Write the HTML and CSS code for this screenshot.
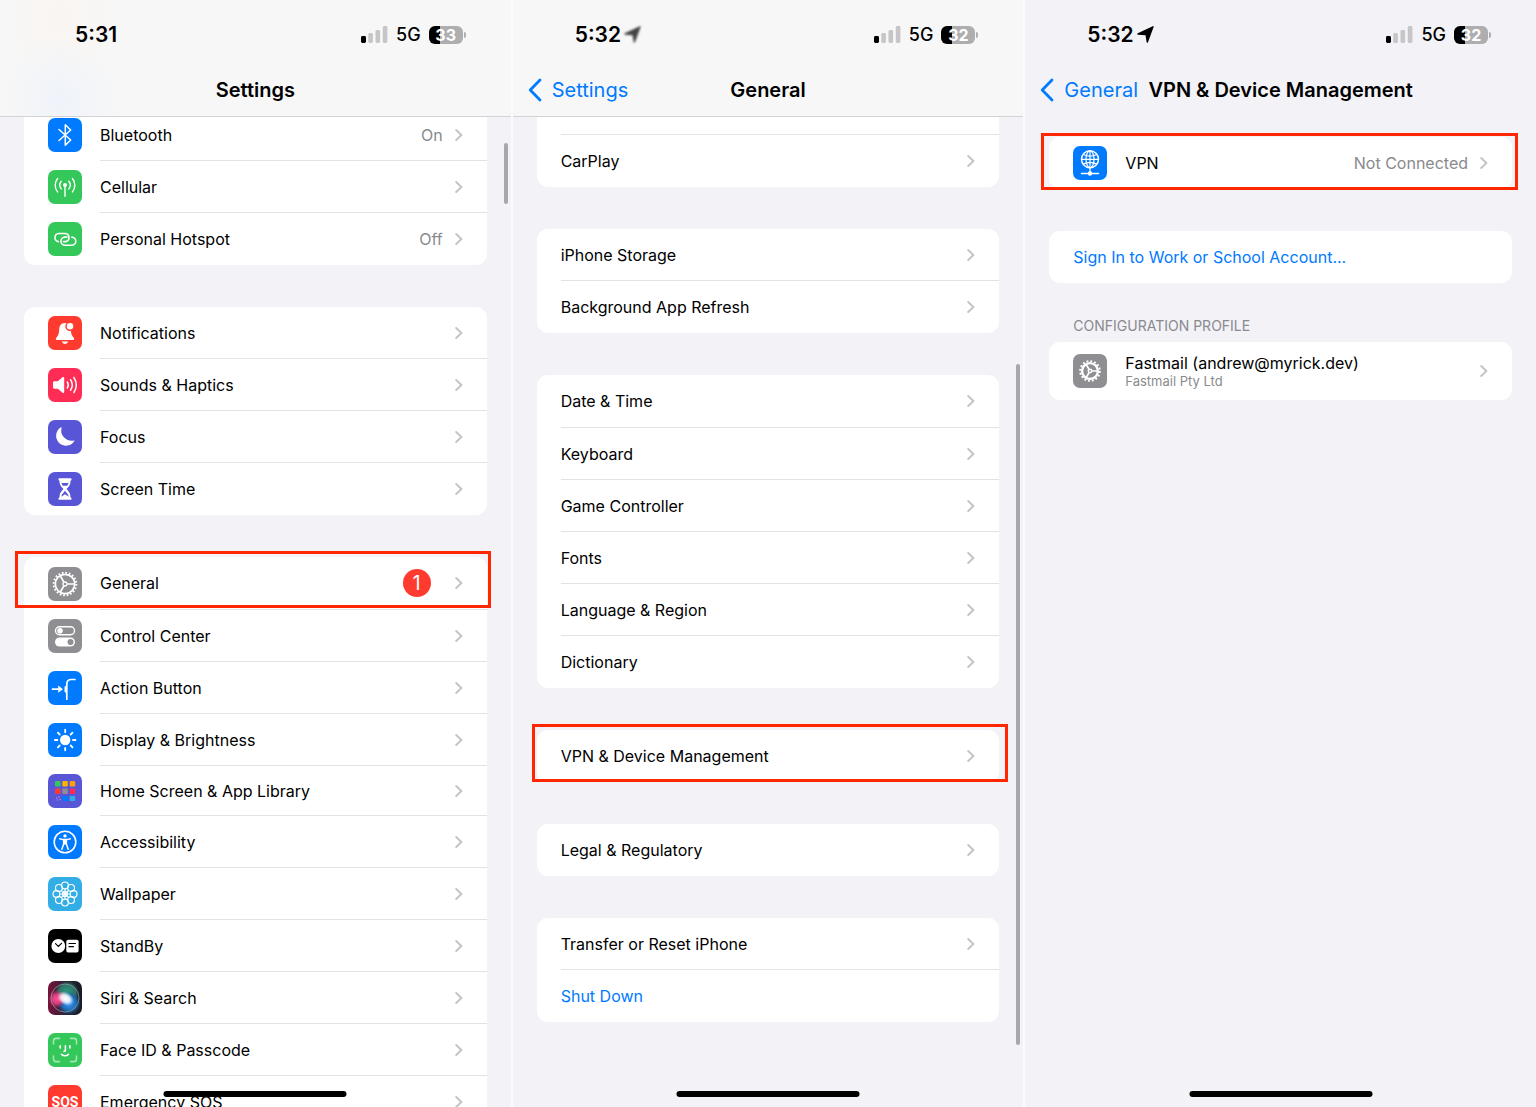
FILE: index.html
```html
<!DOCTYPE html>
<html lang="en">
<head>
  <meta charset="UTF-8" />
  <meta name="viewport" content="width=device-width, initial-scale=1.0" />
  <title>Settings</title>
  <link rel="stylesheet" href="styles.css">
</head>
<body>
  <!-- shared shapes -->
  <svg class="defs" width="0" height="0" aria-hidden="true">
    <symbol id="chevron" viewBox="0 0 8 14"><path d="M1.2 2 6.4 7 1.2 12" fill="none" stroke="#c4c4c7" stroke-width="1.9" stroke-linecap="round" stroke-linejoin="round"/></symbol>
    <symbol id="back" viewBox="0 0 14 24"><path d="M12 2 2.2 12 12 22" fill="none" stroke="#007aff" stroke-width="2.8" stroke-linecap="round" stroke-linejoin="round"/></symbol>
    <symbol id="signal" viewBox="0 0 27 17">
      <rect x="0" y="10" width="5" height="7" rx="1.4" fill="#000"/>
      <g fill="#c6c6c8"><rect x="7.3" y="7" width="4.6" height="10" rx="1.4"/><rect x="14.5" y="4" width="4.6" height="13" rx="1.4"/><rect x="21.8" y="0" width="4.6" height="17" rx="1.4"/></g>
    </symbol>
    <symbol id="location" viewBox="0 0 17 17"><path d="M16.6.9 11 16.200c-.3.800-1.300.700-1.400-.1L8.500 9.200 1 8.700c-.9-.1-1-1.100-.2-1.500L15.700.200c.6-.3 1.100.1.900.7Z"/></symbol>
    <symbol id="gear" viewBox="0 0 34 34">
      <g fill="none" stroke="#fff">
        <circle cx="17" cy="17" r="9.700" stroke-width="1.700"/>
        <circle cx="17" cy="17" r="11.300" stroke-width="2" stroke-dasharray="1.75 1.800"/>
        <circle cx="17" cy="17" r="2" stroke-width="1.300"/>
        <path d="M19.200 17H26.500M15.900 15.100 12.200 8.700M15.900 18.900 12.200 25.300" stroke-width="1.700"/>
      </g>
    </symbol>
  </svg>

  <main class="screens">

    <section class="phone">
      <header class="top top-blur top-tint">
        <div class="status">
          <span class="time time-wide">5:31</span>
          <svg class="signal"><use href="#signal"/></svg>
          <span class="network">5G</span>
          <span class="battery">33</span>
        </div>
        <nav class="nav"><h1>Settings</h1></nav>
      </header>

      <div class="content content-scrolled">
        <ul class="group">
          <li><a class="row" href="#">
            <svg class="icon blue" viewBox="0 0 34 34"><path d="M11 11.500 22.700 22 17.300 27.200V6.800L22.700 12 11 22.500" fill="none" stroke="#fff" stroke-width="1.500" stroke-linejoin="round" stroke-linecap="round"/></svg>
            <span class="body"><span class="label">Bluetooth</span><span class="value">On</span><svg class="chevron"><use href="#chevron"/></svg></span>
          </a></li>
          <li><a class="row" href="#">
            <svg class="icon green" viewBox="0 0 34 34"><g fill="none" stroke="#fff" stroke-width="1.400" stroke-linecap="round"><path d="M17 15.500V26.300M13.200 11.300a6 6 0 0 0 0 7.600M20.800 11.300a6 6 0 0 1 0 7.600M9.600 8.500a10.500 10.500 0 0 0 0 13.400M24.400 8.500a10.500 10.500 0 0 1 0 13.400"/></g><circle cx="17" cy="15" r="2" fill="#fff"/></svg>
            <span class="body"><span class="label">Cellular</span><svg class="chevron"><use href="#chevron"/></svg></span>
          </a></li>
          <li><a class="row" href="#">
            <svg class="icon green" viewBox="0 0 34 34"><g fill="none" stroke="#fff" stroke-width="1.600" stroke-linecap="round"><path d="M10.300 19.600a4.100 4.100 0 0 1 .4-8.100h6.600a4.100 4.100 0 0 1 .4 8.100h-2.200"/><path d="M23.900 15.100a4.100 4.100 0 0 1-.4 8.200h-6.300a4.100 4.100 0 0 1-.4-8.200h2.200"/></g></svg>
            <span class="body"><span class="label">Personal Hotspot</span><span class="value">Off</span><svg class="chevron"><use href="#chevron"/></svg></span>
          </a></li>
        </ul>

        <ul class="group">
          <li><a class="row" href="#">
            <svg class="icon red" viewBox="0 0 34 34"><path d="M17 7c-4 0-5.600 3-5.800 6.300-.2 4.200-.8 6.300-2.900 8.400-.9.900-.6 2.300.7 2.300h16c1.300 0 1.600-1.400.7-2.300-2.100-2.100-2.700-4.200-2.900-8.400C22.600 10 21 7 17 7ZM13.800 25.400h6.400a3.300 3.300 0 0 1-6.400 0Z" fill="#fff"/><circle cx="22" cy="10.300" r="4" fill="#fff" stroke="#ff3b30" stroke-width="1.500"/></svg>
            <span class="body"><span class="label">Notifications</span><svg class="chevron"><use href="#chevron"/></svg></span>
          </a></li>
          <li><a class="row" href="#">
            <svg class="icon pink" viewBox="0 0 34 34"><path d="M5 14.700c0-.9.600-1.500 1.500-1.500H9.800l4.700-4c.8-.6 1.700-.3 1.700.7v14.200c0 1-.9 1.300-1.700.7l-4.700-4H6.500c-.9 0-1.500-.6-1.500-1.500Z" fill="#fff"/><path d="M19.300 14a5.500 5.500 0 0 1 0 6M22.500 11.700a9.500 9.500 0 0 1 0 10.600M25.900 9.500a14 14 0 0 1 0 15" fill="none" stroke="#fff" stroke-width="1.500" stroke-linecap="round"/></svg>
            <span class="body"><span class="label">Sounds &amp; Haptics</span><svg class="chevron"><use href="#chevron"/></svg></span>
          </a></li>
          <li><a class="row" href="#">
            <svg class="icon indigo" viewBox="0 0 34 34"><path d="M13.600 7.700a10.200 10.200 0 0 0 12.300 12.700c.5-.1.700.2.500.6A9.900 9.900 0 1 1 13 7.200c.4-.1.700.1.600.5Z" fill="#fff"/></svg>
            <span class="body"><span class="label">Focus</span><svg class="chevron"><use href="#chevron"/></svg></span>
          </a></li>
          <li><a class="row" href="#">
            <svg class="icon indigo" viewBox="0 0 34 34"><path d="M11.500 6.300h11c1.500 0 1.500 2.200 0 2.400 0 4.600-2 6-4 8.300 2 2.300 4 3.700 4 8.400 1.500.2 1.500 2.400 0 2.400h-11c-1.500 0-1.500-2.200 0-2.400 0-4.700 2-6.100 4-8.400-2-2.300-4-3.700-4-8.300-1.500-.2-1.500-2.400 0-2.400Z" fill="#fff"/><path d="M13.200 9.500h7.600c-.2 2-.9 3.200-1.700 4.300h-4.200c-.8-1.100-1.500-2.300-1.700-4.300ZM17 18.500c.6 1.900 3.500 3.400 3.700 6.200L17 22.300l-3.700 2.400c.2-2.800 3.100-4.300 3.700-6.200Z" fill="#5856d6"/><path d="M13.200 8.400h7.600v2.500h-7.600Z" fill="#fff"/></svg>
            <span class="body"><span class="label">Screen Time</span><svg class="chevron"><use href="#chevron"/></svg></span>
          </a></li>
        </ul>

        <ul class="group group-long">
          <li><a class="row marked marked-left" href="#">
            <svg class="icon gray"><use href="#gear"/></svg>
            <span class="body"><span class="label">General</span><span class="badge">1</span><svg class="chevron"><use href="#chevron"/></svg></span>
          </a></li>
          <li><a class="row" href="#">
            <svg class="icon gray" viewBox="0 0 34 34"><rect x="7.500" y="7.700" width="19" height="8" rx="4" fill="none" stroke="#fff" stroke-width="1.400"/><circle cx="12" cy="11.700" r="2.800" fill="#fff"/><rect x="7" y="18.500" width="20" height="9" rx="4.500" fill="#fff"/><circle cx="22.500" cy="23" r="3" fill="#8e8e93"/></svg>
            <span class="body"><span class="label">Control Center</span><svg class="chevron"><use href="#chevron"/></svg></span>
          </a></li>
          <li><a class="row" href="#">
            <svg class="icon blue" viewBox="0 0 34 34"><path d="M4.500 18.200H11M18.800 28.200V13.200c0-3.200 1.600-4.700 4.400-4.700H27" fill="none" stroke="#fff" stroke-width="1.700" stroke-linecap="round"/><path d="m10.200 14.600 4.800 3.600-4.800 3.600ZM18.500 14.700v7c-2 0-2-1-2-2v-3c0-1 0-2 2-2Z" fill="#fff"/></svg>
            <span class="body"><span class="label">Action Button</span><svg class="chevron"><use href="#chevron"/></svg></span>
          </a></li>
          <li><a class="row" href="#">
            <svg class="icon blue" viewBox="0 0 34 34"><circle cx="17.200" cy="17" r="5.200" fill="#fff"/><path d="M17.200 6.700v2.500M17.200 24.800v2.500M6.900 17h2.500M25 17h2.500M9.900 9.700l1.800 1.800M22.700 22.500l1.800 1.800M9.900 24.300l1.800-1.800M22.700 11.500l1.800-1.800" stroke="#fff" stroke-width="1.800" stroke-linecap="round"/></svg>
            <span class="body"><span class="label">Display &amp; Brightness</span><svg class="chevron"><use href="#chevron"/></svg></span>
          </a></li>
          <li><a class="row row-short" href="#">
            <svg class="icon indigo" viewBox="0 0 34 34"><rect x="7" y="7" width="5.500" height="5.500" rx="1" fill="#34c759"/><rect x="14.300" y="7" width="5.500" height="5.500" rx="1" fill="#ffb300"/><rect x="21.700" y="7" width="5.500" height="5.500" rx="1" fill="#ff9f0a"/><rect x="7" y="14.500" width="5.500" height="5.500" rx="1" fill="#ff3b30"/><rect x="14.300" y="14.500" width="5.500" height="5.500" rx="1" fill="#8e8e93"/><rect x="21.700" y="14.500" width="5.500" height="5.500" rx="1" fill="#ff2d55"/><path d="M8 24h1.200M10.500 23h1.200M9 26h1.200M11.500 25.500h1.200" stroke="#c79ad8" stroke-width="1.200"/><rect x="14.300" y="22" width="6" height="5" rx="1" fill="#007aff"/><rect x="21.700" y="22" width="5.500" height="5" rx="1" fill="#32ade6"/></svg>
            <span class="body"><span class="label">Home Screen &amp; App Library</span><svg class="chevron"><use href="#chevron"/></svg></span>
          </a></li>
          <li><a class="row" href="#">
            <svg class="icon blue" viewBox="0 0 34 34"><circle cx="17" cy="17" r="10.800" fill="none" stroke="#fff" stroke-width="1.600"/><circle cx="17" cy="10.900" r="1.700" fill="#fff"/><path d="M11.700 13.700 15 14.600h4l3.300-.9M15.600 14.600v4.700l-1.800 5M18.400 14.600v4.700l1.800 5M17 14.500V19" fill="none" stroke="#fff" stroke-width="1.500" stroke-linecap="round" stroke-linejoin="round"/></svg>
            <span class="body"><span class="label">Accessibility</span><svg class="chevron"><use href="#chevron"/></svg></span>
          </a></li>
          <li><a class="row" href="#">
            <svg class="icon cyan" viewBox="0 0 34 34"><g fill="none" stroke="#fff" stroke-width="1.200"><circle cx="17" cy="8.400" r="3.400"/><circle cx="23.100" cy="10.900" r="3.400"/><circle cx="25.600" cy="17" r="3.400"/><circle cx="23.100" cy="23.100" r="3.400"/><circle cx="17" cy="25.600" r="3.400"/><circle cx="10.900" cy="23.100" r="3.400"/><circle cx="8.400" cy="17" r="3.400"/><circle cx="10.900" cy="10.900" r="3.400"/><circle cx="17" cy="17" r="2.500"/><path d="M17 11.800v10.400M11.800 17h10.400M13.300 13.300l7.400 7.400M20.700 13.300l-7.400 7.400"/></g></svg>
            <span class="body"><span class="label">Wallpaper</span><svg class="chevron"><use href="#chevron"/></svg></span>
          </a></li>
          <li><a class="row" href="#">
            <svg class="icon black" viewBox="0 0 34 34"><circle cx="10.300" cy="17" r="6.900" fill="#fff"/><rect x="18.300" y="10.700" width="12.300" height="12.800" rx="1.800" fill="#fff"/><path d="m7.500 14.700 2.800 2.800 3.200-3.200M21 14.500h6.500M21 17.700h4.500" fill="none" stroke="#000" stroke-width="1.200" stroke-linecap="round"/></svg>
            <span class="body"><span class="label">StandBy</span><svg class="chevron"><use href="#chevron"/></svg></span>
          </a></li>
          <li><a class="row" href="#">
            <svg class="icon" viewBox="0 0 34 34">
              <defs>
                <linearGradient id="siri-bg"><stop offset="0" stop-color="#7b1138"/><stop offset=".5" stop-color="#2a2438"/><stop offset="1" stop-color="#171c24"/></linearGradient>
                <radialGradient id="siri-pink"><stop offset="0" stop-color="#ff4f95"/><stop offset=".5" stop-color="#d8407f"/><stop offset="1" stop-color="#c22b67" stop-opacity="0"/></radialGradient>
                <radialGradient id="siri-green"><stop offset="0" stop-color="#2f9b80"/><stop offset=".7" stop-color="#2d7668"/><stop offset="1" stop-color="#2b665c" stop-opacity="0"/></radialGradient>
                <radialGradient id="siri-blue"><stop offset="0" stop-color="#399cff"/><stop offset=".6" stop-color="#1f6cb4"/><stop offset="1" stop-color="#185790" stop-opacity="0"/></radialGradient>
                <radialGradient id="siri-glow"><stop offset="0" stop-color="#fff"/><stop offset=".5" stop-color="#fff" stop-opacity=".85"/><stop offset="1" stop-color="#fff" stop-opacity="0"/></radialGradient>
              </defs>
              <rect width="34" height="34" fill="url(#siri-bg)"/>
              <circle cx="19" cy="12" r="12" fill="url(#siri-green)"/>
              <circle cx="21" cy="22" r="12" fill="url(#siri-blue)"/>
              <circle cx="9" cy="18" r="9" fill="url(#siri-pink)"/>
              <circle cx="17" cy="17" r="14" fill="none" stroke="#8fa6a8" stroke-opacity=".7" stroke-width="1"/>
              <ellipse cx="17.500" cy="17.500" rx="9" ry="6.500" transform="rotate(30 17.500 17.500)" fill="url(#siri-glow)"/>
            </svg>
            <span class="body"><span class="label">Siri &amp; Search</span><svg class="chevron"><use href="#chevron"/></svg></span>
          </a></li>
          <li><a class="row" href="#">
            <svg class="icon green" viewBox="0 0 34 34"><g fill="none" stroke="#fff" stroke-linecap="round" stroke-width="1.600"><path d="M5.500 11V8c0-1.700.9-2.600 2.600-2.600H11.500M22.500 5.400h3.400c1.700 0 2.600.9 2.600 2.600v3M28.500 23v3c0 1.700-.9 2.600-2.600 2.600h-3.400M11.500 28.600H8.100c-1.700 0-2.600-.9-2.600-2.600v-3" stroke-opacity=".55"/><path d="M12.200 12.800v2.200M21.900 12.800v2.200M17.400 12.800v4.400c0 .8-.4 1.200-1.300 1.200M13.500 21.300c2 1.900 5 1.900 7 0"/></g></svg>
            <span class="body"><span class="label">Face ID &amp; Passcode</span><svg class="chevron"><use href="#chevron"/></svg></span>
          </a></li>
          <li><a class="row" href="#">
            <span class="icon red sos">SOS</span>
            <span class="body"><span class="label">Emergency SOS</span><svg class="chevron"><use href="#chevron"/></svg></span>
          </a></li>
        </ul>
      </div>
      <span class="scrollbar scrollbar-top"></span>
      <span class="home"></span>
    </section>

    <section class="phone">
      <header class="top top-blur">
        <div class="status">
          <span class="time">5:32</span>
          <svg class="location location-fading"><use href="#location"/></svg>
          <svg class="signal"><use href="#signal"/></svg>
          <span class="network">5G</span>
          <span class="battery">32</span>
        </div>
        <nav class="nav">
          <a class="back" href="#"><svg><use href="#back"/></svg>Settings</a>
          <h1>General</h1>
        </nav>
      </header>

      <div class="content">
        <ul class="group group-cut">
          <li class="row-cut"></li>
          <li><a class="row" href="#"><span class="body"><span class="label">CarPlay</span><svg class="chevron"><use href="#chevron"/></svg></span></a></li>
        </ul>
        <ul class="group">
          <li><a class="row" href="#"><span class="body"><span class="label">iPhone Storage</span><svg class="chevron"><use href="#chevron"/></svg></span></a></li>
          <li><a class="row" href="#"><span class="body"><span class="label">Background App Refresh</span><svg class="chevron"><use href="#chevron"/></svg></span></a></li>
        </ul>
        <ul class="group group-long">
          <li><a class="row" href="#"><span class="body"><span class="label">Date &amp; Time</span><svg class="chevron"><use href="#chevron"/></svg></span></a></li>
          <li><a class="row" href="#"><span class="body"><span class="label">Keyboard</span><svg class="chevron"><use href="#chevron"/></svg></span></a></li>
          <li><a class="row" href="#"><span class="body"><span class="label">Game Controller</span><svg class="chevron"><use href="#chevron"/></svg></span></a></li>
          <li><a class="row" href="#"><span class="body"><span class="label">Fonts</span><svg class="chevron"><use href="#chevron"/></svg></span></a></li>
          <li><a class="row" href="#"><span class="body"><span class="label">Language &amp; Region</span><svg class="chevron"><use href="#chevron"/></svg></span></a></li>
          <li><a class="row" href="#"><span class="body"><span class="label">Dictionary</span><svg class="chevron"><use href="#chevron"/></svg></span></a></li>
        </ul>
        <ul class="group">
          <li><a class="row marked marked-right" href="#"><span class="body"><span class="label">VPN &amp; Device Management</span><svg class="chevron"><use href="#chevron"/></svg></span></a></li>
        </ul>
        <ul class="group">
          <li><a class="row" href="#"><span class="body"><span class="label">Legal &amp; Regulatory</span><svg class="chevron"><use href="#chevron"/></svg></span></a></li>
        </ul>
        <ul class="group">
          <li><a class="row" href="#"><span class="body"><span class="label">Transfer or Reset iPhone</span><svg class="chevron"><use href="#chevron"/></svg></span></a></li>
          <li><button class="row action" type="button"><span class="body"><span class="label">Shut Down</span></span></button></li>
        </ul>
      </div>
      <span class="scrollbar scrollbar-long"></span>
      <span class="home"></span>
    </section>

    <section class="phone">
      <header class="top">
        <div class="status">
          <span class="time">5:32</span>
          <svg class="location"><use href="#location"/></svg>
          <svg class="signal"><use href="#signal"/></svg>
          <span class="network">5G</span>
          <span class="battery">32</span>
        </div>
        <nav class="nav">
          <a class="back" href="#"><svg><use href="#back"/></svg>General</a>
          <h1>VPN &amp; Device Management</h1>
        </nav>
      </header>

      <div class="content content-top">
        <ul class="group">
          <li><a class="row marked" href="#">
            <svg class="icon blue" viewBox="0 0 34 34"><g fill="none" stroke="#fff" stroke-width="1.200"><circle cx="17" cy="13.300" r="8.500" stroke-width="1.500"/><ellipse cx="17" cy="13.300" rx="4" ry="8.500"/><path d="M17 4.800v22M8.500 13.300h17M10.300 8.500c4 2 9.400 2 13.400 0M10.300 18.100c4-2 9.400-2 13.400 0"/><path d="M8.500 27.500h17" stroke-width="1.500" stroke-linecap="round"/></g><circle cx="17" cy="27.500" r="2.200" fill="#fff"/></svg>
            <span class="body"><span class="label">VPN</span><span class="value">Not Connected</span><svg class="chevron"><use href="#chevron"/></svg></span>
          </a></li>
        </ul>
        <ul class="group">
          <li><button class="row action" type="button"><span class="body"><span class="label">Sign In to Work or School Account...</span></span></button></li>
        </ul>
        <h2 class="caption">CONFIGURATION PROFILE</h2>
        <ul class="group">
          <li><a class="row row-tall" href="#">
            <svg class="icon gray" viewBox="0 0 34 34"><g transform="translate(17 17) scale(.86) translate(-17 -17)" fill="none" stroke="#fff"><circle cx="17" cy="17" r="9.200" stroke-width="2.700"/><circle cx="17" cy="17" r="11.400" stroke-width="2.400" stroke-dasharray="2.200 2.280"/><circle cx="17" cy="17" r="2" stroke-width="1.800"/><path d="M19.200 17h7M15.900 15.100l-3.600-6.200M15.900 18.900l-3.600 6.200" stroke-width="2"/></g></svg>
            <span class="body"><span class="label">Fastmail (andrew@myrick.dev)<small>Fastmail Pty Ltd</small></span><svg class="chevron"><use href="#chevron"/></svg></span>
          </a></li>
        </ul>
      </div>
      <span class="home"></span>
    </section>

  </main>
</body>
</html>
```
FILE: styles.css
```css
* {
  box-sizing: border-box;
}
body {
  margin: 0;
  background: #fbfbfd;
  color: #000;
  font-family: Inter, "Liberation Sans", sans-serif;
  font-size: 16px;
}
a {
  color: inherit;
  text-decoration: none;
}
ul {
  list-style: none;
  margin: 0;
  padding: 0;
}
h1, h2 {
  margin: 0;
}
.defs {
  position: absolute;
}

.screens {
  display: flex;
  gap: 2px;
}
.phone {
  position: relative;
  flex: 1;
  min-width: 0;
  height: 100vh;
  overflow: hidden;
  background: #f2f2f7;
}

/* status bar and title */
.top {
  position: relative;
  z-index: 2;
  padding-bottom: 4px;
  border-bottom: 1px solid transparent;
}
.top-blur {
  background: #f7f7f7;
  border-bottom-color: #d3d3d5;
}
.top-tint {
  background:
    radial-gradient(circle at 60px 100px, #eff3fa 0, rgba(240, 243, 250, 0) 60px),
    radial-gradient(circle at 60px 20px, #faf5f1 0, rgba(250, 245, 241, 0) 60px),
    #f7f7f7;
}
.status {
  display: flex;
  align-items: center;
  height: 68px;
  padding: 1px 48px 0 62px;
}
.time {
  font-size: 21px;
  font-weight: 600;
}
.time-wide {
  padding-left: 13px;
}
.location {
  width: 17px;
  height: 17px;
  margin-left: 3px;
}
.location-fading {
  fill: #444;
  filter: blur(1px);
}
.signal {
  width: 27px;
  height: 17px;
  margin-left: auto;
}
.network {
  margin: 0 8px;
  font-size: 18px;
  font-weight: 500;
}
.battery {
  position: relative;
  width: 34px;
  height: 18px;
  border-radius: 6px;
  background: linear-gradient(90deg, #000 33%, #aeaeb0 33%);
  color: #fff;
  font-size: 16px;
  font-weight: 700;
  line-height: 18px;
  text-align: center;
}
.battery::after {
  content: "";
  position: absolute;
  left: 35px;
  top: 6px;
  width: 2px;
  height: 6px;
  border-radius: 0 2px 2px 0;
  background: #aeaeb0;
}
.nav {
  display: grid;
  grid-template-columns: 1fr auto 1fr;
  align-items: center;
  height: 44px;
  padding: 0 15px;
  font-size: 20px;
}
.nav h1 {
  grid-column: 2;
  font-size: 20px;
  font-weight: 600;
}
.back {
  display: flex;
  align-items: center;
  gap: 10px;
  color: #007aff;
}
.back svg {
  width: 14px;
  height: 24px;
}

/* grouped lists */
.content {
  display: flex;
  flex-direction: column;
  gap: 42px;
  padding: 0 24px;
}
.content-scrolled {
  margin-top: -8px;
}
.content-top {
  padding-top: 20px;
}
.group {
  border-radius: 11px;
  background: #fff;
}
.group-cut {
  border-radius: 0 0 11px 11px;
}
.row {
  position: relative;
  display: flex;
  align-items: center;
  gap: 18px;
  width: 100%;
  height: 52px;
  padding: 0 0 0 24px;
}
.group-long li:first-child .row {
  height: 53px;
}
.row-short {
  height: 50px;
}
.row-tall {
  height: 58px;
}
.row-cut {
  height: 18px;
  margin-left: 24px;
  border-bottom: 1px solid #e3e3e5;
}
.body {
  display: flex;
  flex: 1;
  align-items: center;
  align-self: stretch;
  gap: 12px;
  padding-right: 24px;
  border-bottom: 1px solid #e3e3e5;
}
li:last-child .body {
  border-bottom: 0;
}
.label {
  flex: 1;
  text-align: left;
}
.label small {
  display: block;
  color: #8a8a8e;
  font-size: 13px;
  line-height: 16px;
}
.value {
  color: #8a8a8e;
}
.chevron {
  width: 8px;
  height: 14px;
}
.action {
  border: 0;
  background: none;
  color: #007aff;
  font: inherit;
}
.badge {
  width: 28px;
  height: 28px;
  margin-right: 12px;
  border-radius: 50%;
  background: #ff3b30;
  color: #fff;
  font-size: 20px;
  line-height: 28px;
  text-align: center;
}
.caption {
  margin: -8px 0 -34px 24px;
  color: #8a8a8e;
  font-size: 14px;
  font-weight: 400;
  line-height: 17px;
}

.icon {
  flex: none;
  width: 34px;
  height: 34px;
  border-radius: 7px;
}
.blue { background: #007aff; }
.green { background: #34c759; }
.red { background: #ff3b30; }
.pink { background: #ff2d55; }
.indigo { background: #5856d6; }
.gray { background: #8e8e93; }
.cyan { background: #32ade6; }
.black { background: #000; }
.sos {
  color: #fff;
  font-family: Roboto, sans-serif;
  font-size: 14px;
  font-weight: 700;
  line-height: 34px;
  text-align: center;
}

/* red outline around the row to tap */
.marked::before {
  content: "";
  position: absolute;
  inset: -4px -6px -1px -8px;
  border: 3px solid #ff2600;
}
.marked-left::before {
  inset: -6px -4px 2px -9px;
}
.marked-right::before {
  inset: -6px -9px 0 -5px;
}

.scrollbar {
  position: absolute;
  right: 3px;
  width: 4px;
  border-radius: 2px;
  background: #a8a8ac;
}
.scrollbar-top {
  top: 143px;
  height: 61px;
}
.scrollbar-long {
  top: 364px;
  bottom: 62px;
}
.home {
  position: absolute;
  left: 50%;
  bottom: 10px;
  width: 183px;
  height: 6px;
  border-radius: 3px;
  background: #000;
  transform: translateX(-50%);
}
```
